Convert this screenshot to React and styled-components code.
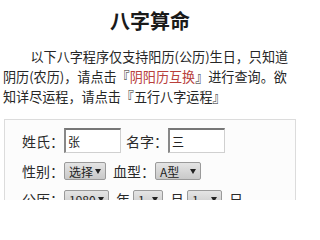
import React from 'react'
import styled, { createGlobalStyle } from 'styled-components'

const GlobalStyle = createGlobalStyle`
  body {
    margin: 0;
    background: #fff;
    font-family: "Noto Sans CJK SC", "Noto Sans", sans-serif;
    color: #333;
  }
`

const Page = styled.div`
  width: 300px;
  height: 200px;
  overflow: hidden;
`

const Title = styled.h1`
  margin: 0;
  padding-top: 9px;
  font-size: 20px;
  line-height: 24px;
  font-weight: 700;
  text-align: center;
  color: #1a1a1a;
`

const Intro = styled.p`
  margin: 14px 0 0;
  padding: 0 3px;
  font-size: 13.1px;
  line-height: 20px;
  text-indent: 2.1em;
  color: #262626;
`

const Link = styled.span`
  color: #b8403c;
`

const FormBox = styled.div`
  margin: 12px 4px 0;
  padding: 8px 0 10px 17px;
  border: 1px solid #dcdcdc;
  background: #fcfcfc;
  display: flex;
  flex-direction: column;
  gap: 8px;
`

const Row = styled.div`
  display: flex;
  align-items: center;
`

const Label = styled.span`
  font-size: 14px;
  color: #2a2a2a;
  white-space: nowrap;
  margin-left: ${p => p.$gap || 0}px;
`

const Unit = styled.span`
  font-size: 14px;
  color: #2a2a2a;
  margin: 0 3px 0 7px;
`

const TextInput = styled.input`
  box-sizing: border-box;
  width: 57px;
  height: 25px;
  padding: 0 2px;
  font-family: inherit;
  font-size: 12px;
  color: #222;
  background: #fff;
  border-style: solid;
  border-width: 2px 1px 1px 2px;
  border-color: #777 #d0d0d0 #d0d0d0 #888;
  outline: none;
`

const Select = styled.span`
  box-sizing: border-box;
  display: inline-flex;
  align-items: center;
  justify-content: space-between;
  width: ${p => p.$w}px;
  height: 18px;
  padding: 0 4px 0 4px;
  font-size: 12px;
  color: #222;
  border: 1px solid #9a9a9a;
  border-radius: 2px;
  background: linear-gradient(#e4e4e4, #c9c9c9);
`

const Arrow = styled.span`
  width: 0;
  height: 0;
  border-left: 3px solid transparent;
  border-right: 3px solid transparent;
  border-top: 5px solid #222;
`

const Drop = ({ w, children }) => (
  <Select $w={w}>
    <span>{children}</span>
    <Arrow />
  </Select>
)

export default function App() {
  return (
    <Page>
      <GlobalStyle />
      <Title>八字算命</Title>
      <Intro>
        以下八字程序仅支持阳历(公历)生日，只知道阴历(农历)，请点击『<Link>阴阳历互换</Link>』进行查询。欲知详尽运程，请点击『五行八字运程』
      </Intro>
      <FormBox>
        <Row>
          <Label>姓氏：</Label>
          <TextInput defaultValue="张" />
          <Label $gap={5}>名字：</Label>
          <TextInput defaultValue="三" />
        </Row>
        <Row>
          <Label>性别：</Label>
          <Drop w={42}>选择</Drop>
          <Label $gap={7}>血型：</Label>
          <Drop w={46}>A型</Drop>
        </Row>
        <Row>
          <Label>公历：</Label>
          <Drop w={45}>1980</Drop>
          <Unit>年</Unit>
          <Drop w={30}>1</Drop>
          <Unit>月</Unit>
          <Drop w={35}>1</Drop>
          <Unit>日</Unit>
        </Row>
      </FormBox>
    </Page>
  )
}
